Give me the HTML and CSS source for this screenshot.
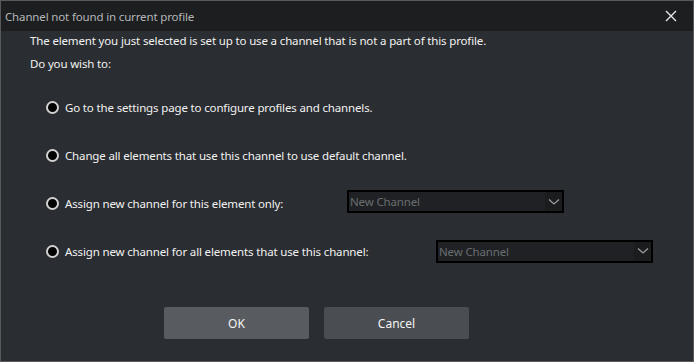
FILE: index.html
```html
<!DOCTYPE html>
<html>
<head>
<meta charset="utf-8">
<link rel="stylesheet" href="styles.css">
</head>
<body>
<div class="window">
  <div class="titlebar">
    <span class="title">Channel not found in current profile</span>
    <svg class="close" width="12" height="12" viewBox="0 0 12 12"><path d="M1 1L11 11M11 1L1 11" stroke="#e8e8e8" stroke-width="1.4"/></svg>
  </div>
  <div class="content">
    <p class="line first">The element you just selected is set up to use a channel that is not a part of this profile.</p>
    <p class="line second">Do you wish to:</p>
    <div class="options">
      <div class="option"><span class="radio"></span><span class="label">Go to the settings page to configure profiles and channels.</span></div>
      <div class="option"><span class="radio"></span><span class="label">Change all elements that use this channel to use default channel.</span></div>
      <div class="option"><span class="radio"></span><span class="label w1">Assign new channel for this element only:</span>
        <div class="select raised"><span class="sel-text">New Channel</span><span class="arrow"><svg width="12" height="8" viewBox="0 0 12 8"><path d="M1 1.5L6 6L11 1.5" fill="none" stroke="#9a9da0" stroke-width="1.3"/></svg></span></div>
      </div>
      <div class="option"><span class="radio"></span><span class="label w2">Assign new channel for all elements that use this channel:</span>
        <div class="select"><span class="sel-text">New Channel</span><span class="arrow"><svg width="12" height="8" viewBox="0 0 12 8"><path d="M1 1.5L6 6L11 1.5" fill="none" stroke="#9a9da0" stroke-width="1.3"/></svg></span></div>
      </div>
    </div>
    <div class="buttons">
      <button class="btn ok">OK</button>
      <button class="btn cancel">Cancel</button>
    </div>
  </div>
</div>
</body>
</html>
```
FILE: styles.css
```css
html, body {
  margin: 0;
  padding: 0;
  background: #2a2d31;
}
body {
  font-family: "Noto Sans", "Open Sans", sans-serif;
  font-size: 11.5px;
  letter-spacing: -0.15px;
  color: #f2f2f2;
}
.window {
  width: 694px;
  height: 362px;
  box-sizing: border-box;
  border: 1px solid #58595b;
  background: #2a2d31;
  display: flex;
  flex-direction: column;
}
.titlebar {
  height: 30px;
  background: #1c1e20;
  display: flex;
  align-items: center;
  justify-content: space-between;
  padding: 0 16px 0 4px;
  flex-shrink: 0;
}
.title {
  color: #b4b6b8;
  font-size: 11.5px;
}
.close {
  display: block;
}
.content {
  flex: 1;
  padding: 0 0 0 29px;
  display: flex;
  flex-direction: column;
}
.line {
  margin: 0;
  line-height: 16px;
}
.first {
  margin-top: 2px;
}
.second {
  margin-top: 7px;
}
.options {
  display: flex;
  flex-direction: column;
  padding-left: 16px;
  margin-top: 23px;
  gap: 24px;
}
.option {
  display: flex;
  align-items: center;
  height: 24px;
}
.radio {
  width: 13px;
  height: 13px;
  box-sizing: border-box;
  border-radius: 50%;
  background: #000;
  border: 2px solid #d2d2d2;
  margin-right: 6px;
  flex-shrink: 0;
}
.label {
  white-space: nowrap;
}
.w1 { width: 282px; }
.w2 { width: 371px; }
.select {
  width: 217px;
  height: 23px;
  box-sizing: border-box;
  border: 2px solid #000;
  background: #1f2124;
  display: flex;
  align-items: center;
  justify-content: space-between;
}
.raised {
  margin-top: -3px;
}
.sel-text {
  color: #6a6d70;
  padding-left: 1px;
}
.arrow {
  width: 17px;
  height: 100%;
  background: #1a1c1e;
  display: flex;
  align-items: center;
  justify-content: center;
}
.arrow svg { display: block; }
.buttons {
  display: flex;
  gap: 15px;
  margin-top: 44px;
  padding-left: 134px;
}
.btn {
  width: 145px;
  height: 32px;
  border: none;
  border-radius: 2px;
  color: #f4f4f4;
  font-family: inherit;
  font-size: 12px;
  padding: 0;
}
.ok { background: #585c60; }
.cancel { background: #4a4e52; }
```
